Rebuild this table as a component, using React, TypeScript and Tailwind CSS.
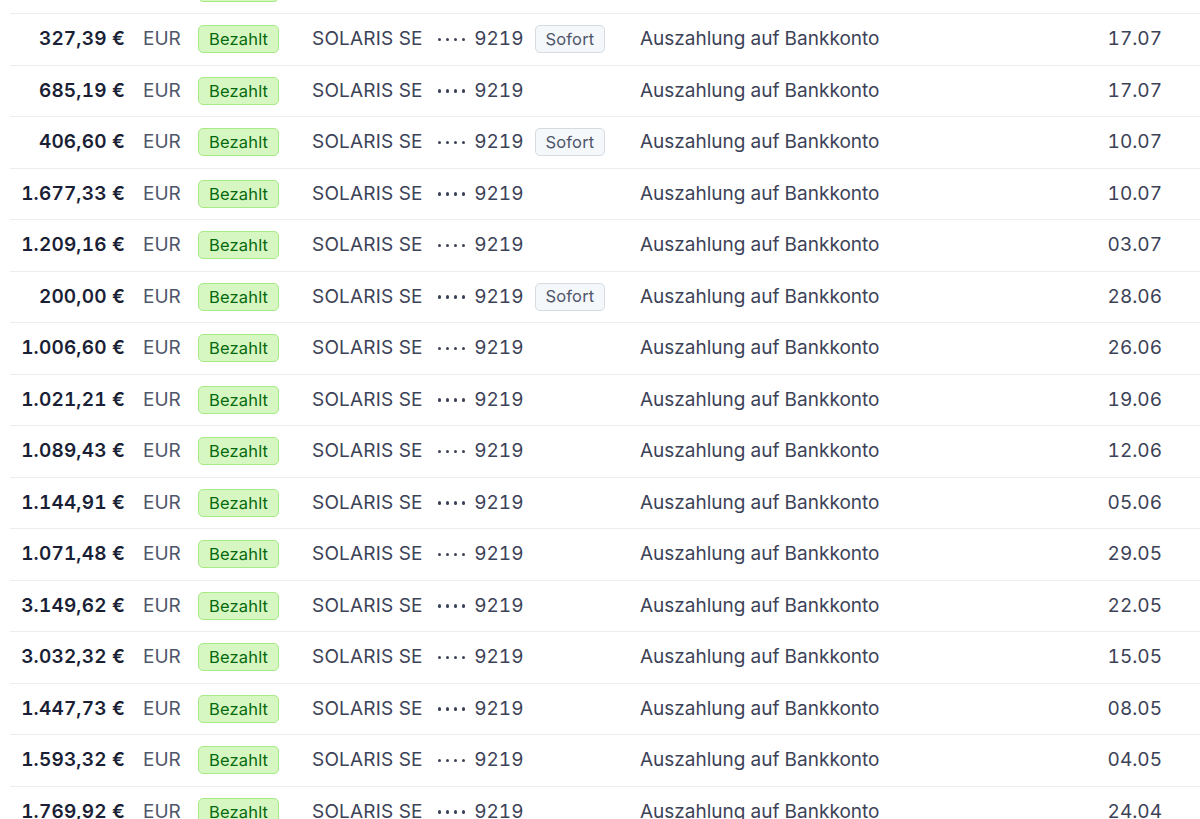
const rows: { amount: string; sofort?: boolean; date: string }[] = [
	{ amount: "512,40 €", date: "24.07" },
	{ amount: "327,39 €", sofort: true, date: "17.07" },
	{ amount: "685,19 €", date: "17.07" },
	{ amount: "406,60 €", sofort: true, date: "10.07" },
	{ amount: "1.677,33 €", date: "10.07" },
	{ amount: "1.209,16 €", date: "03.07" },
	{ amount: "200,00 €", sofort: true, date: "28.06" },
	{ amount: "1.006,60 €", date: "26.06" },
	{ amount: "1.021,21 €", date: "19.06" },
	{ amount: "1.089,43 €", date: "12.06" },
	{ amount: "1.144,91 €", date: "05.06" },
	{ amount: "1.071,48 €", date: "29.05" },
	{ amount: "3.149,62 €", date: "22.05" },
	{ amount: "3.032,32 €", date: "15.05" },
	{ amount: "1.447,73 €", date: "08.05" },
	{ amount: "1.593,32 €", date: "04.05" },
	{ amount: "1.769,92 €", date: "24.04" },
];

function Dots() {
	return (
		<span className="flex items-center gap-[4.5px]">
			{[0, 1, 2, 3].map((i) => (
				<span key={i} className="w-[3.5px] h-[3.5px] rounded-full bg-[#3c4257]" />
			))}
		</span>
	);
}

export default function App() {
	return (
		<div className="w-[1200px] h-[819px] overflow-hidden bg-white font-['Inter',sans-serif] text-[19px] text-[#3c4257] tabular-nums">
			<div className="-mt-[37.5px] pl-[10px]">
				{rows.map((r, i) => (
					<div key={i} className="h-[51.5px] flex items-center border-b border-[#ebeef1]">
						<div className="w-[115px] text-right font-semibold tracking-[0.01em] text-[#1a1f36]">{r.amount}</div>
						<div className="w-[55px] ml-[18px] text-[#4f566b]">EUR</div>
						<div className="w-[114px]">
							<span className="inline-flex items-center h-[28px] px-[10px] rounded-[5px] border border-[#a6eb84] bg-[#d7f7c2] text-[16.5px] tracking-[0.01em] text-[#05690d]">
								Bezahlt
							</span>
						</div>
						<div className="w-[328px] flex items-center">
							<span className="tracking-[0.01em]">SOLARIS SE</span>
							<span className="ml-[15px]">
								<Dots />
							</span>
							<span className="ml-[9px]">9219</span>
							{r.sofort && (
								<span className="ml-[11px] inline-flex items-center h-[28px] px-[10px] rounded-[5px] border border-[#d5dbe1] bg-[#f5f8fa] text-[16.5px] tracking-[0.01em] text-[#4f566b]">
									Sofort
								</span>
							)}
						</div>
						<div className="flex-1">Auszahlung auf Bankkonto</div>
						<div className="pr-[38px] text-right">{r.date}</div>
					</div>
				))}
			</div>
		</div>
	);
}
